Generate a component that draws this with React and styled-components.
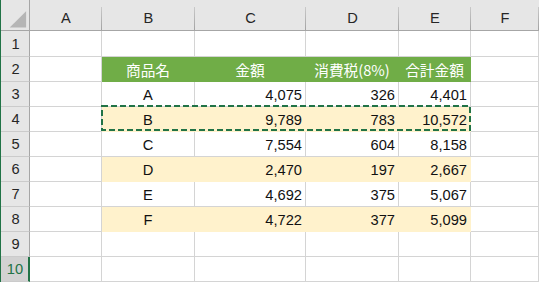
import React from 'react'
import styled, { createGlobalStyle, css } from 'styled-components'

const columns = ['A', 'B', 'C', 'D', 'E', 'F']

const header = ['商品名', '金額', '消費税(8%)', '合計金額']

const rows = [
	['A', '4,075', '326', '4,401'],
	['B', '9,789', '783', '10,572'],
	['C', '7,554', '604', '8,158'],
	['D', '2,470', '197', '2,667'],
	['E', '4,692', '375', '5,067'],
	['F', '4,722', '377', '5,099'],
]

const GlobalStyle = createGlobalStyle`
	html, body {
		margin: 0;
		padding: 0;
		background: #fff;
		overflow: hidden;
	}
`

function App() {
	const body = []
	for (let r = 1; r <= 10; r++) {
		let cells = [null, null, null, null]
		let kind = 'plain'
		if (r === 2) {
			cells = header
			kind = 'head'
		} else if (r >= 3 && r <= 8) {
			cells = rows[r - 3]
			kind = r % 2 === 0 ? 'band' : 'plain'
		}
		body.push(
			<RowHeader key={'h' + r} $selected={r === 10}>
				{r}
			</RowHeader>
		)
		body.push(<Cell key={'a' + r} />)
		cells.forEach((text, i) => (
			body.push(
				<Cell key={r + '-' + i} $fill={kind} $align={i === 0 || kind === 'head' ? 'center' : 'right'}>
					{text}
				</Cell>
			)
		))
		body.push(<Cell key={'f' + r} />)
	}

	return (
		<>
			<GlobalStyle />
			<Sheet>
				<Corner>
					<svg width="29" height="30" viewBox="0 0 29 30">
						<polygon points="9,28 26,28 26,11" fill="#b5b5b5" />
					</svg>
				</Corner>
				{columns.map((c) => (
					<ColumnHeader key={c}>{c}</ColumnHeader>
				))}
				{body}
				<Marquee width="370" height="26" viewBox="0 0 370 26">
					<rect x="1" y="1" width="368" height="24" fill="none" stroke="#217346" strokeWidth="2" strokeDasharray="6 3" />
				</Marquee>
			</Sheet>
		</>
	)
}

const Sheet = styled.div`
	position: relative;
	display: grid;
	grid-template-columns: 29px 72px 93px 111px 93px 72px 1fr;
	grid-template-rows: 31px 26px repeat(9, 25px);
	width: 539px;
	height: 282px;
	box-sizing: border-box;
	border-left: 1px solid #217346;
	font-family: 'Liberation Sans', 'Noto Sans CJK JP', sans-serif;
	font-size: 14.67px;
	color: #111;
`

const headerBase = css`
	box-sizing: border-box;
	display: flex;
	align-items: center;
	justify-content: center;
	background-color: #e6e6e6;
	color: #262626;
`

const Corner = styled.div`
	${headerBase};
	border-right: 1px solid #a6a6a6;
	border-bottom: 1px solid #a6a6a6;
	align-items: flex-start;
	justify-content: flex-start;
`

const ColumnHeader = styled.div`
	${headerBase};
	padding-top: 6px;
	border-bottom: 1px solid #a6a6a6;
	background-image: linear-gradient(to bottom, #e6e6e6 7px, #c9c9c9 7px, #a3a3a3);
	background-repeat: no-repeat;
	background-position: right top;
	background-size: 1px 100%;
`

const RowHeader = styled.div`
	${headerBase};
	border-bottom: 1px solid #cbcbcb;
	border-right: ${(p) => (p.$selected ? '2px solid #217346' : '1px solid #a6a6a6')};
	background-color: ${(p) => (p.$selected ? '#d2d2d2' : '#e6e6e6')};
	color: ${(p) => (p.$selected ? '#217346' : '#262626')};
	padding-left: 1px;
`

const fills = {
	plain: null,
	head: '#70ad47',
	band: '#fff2cc',
}

const Cell = styled.div`
	box-sizing: border-box;
	display: flex;
	align-items: center;
	justify-content: ${(p) => (p.$align === 'right' ? 'flex-end' : 'center')};
	padding: 1px 3px 0 3px;
	white-space: nowrap;
	border-right: 1px solid ${(p) => fills[p.$fill] || '#d4d4d4'};
	border-bottom: 1px solid ${(p) => fills[p.$fill] || '#d4d4d4'};
	background: ${(p) => fills[p.$fill] || '#fff'};
	color: ${(p) => (p.$fill === 'head' ? '#fff' : '#111')};
	font-family: ${(p) => (p.$fill === 'head' ? "'Noto Sans CJK JP', sans-serif" : "'Liberation Sans', 'Noto Sans CJK JP', sans-serif")};
`

const Marquee = styled.svg`
	position: absolute;
	left: 100px;
	top: 105px;
	pointer-events: none;
`

export default App
